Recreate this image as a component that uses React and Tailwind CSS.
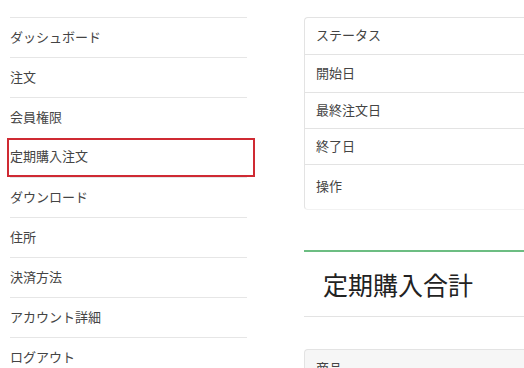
export default function App() {
  const items = [
    "ダッシュボード",
    "注文",
    "会員権限",
    "定期購入注文",
    "ダウンロード",
    "住所",
    "決済方法",
    "アカウント詳細",
    "ログアウト",
  ];
  const rows = [
    ["ステータス", "h-[36px]"],
    ["開始日", "h-[38px]"],
    ["最終注文日", "h-[36px]"],
    ["終了日", "h-[36px]"],
    ["操作", "h-[46px]"],
  ];
  return (
    <div
      className="w-[524px] h-[368px] overflow-hidden bg-white flex items-start pl-[10px] pt-[17px] text-[#444]"
      style={{ fontFamily: '"Noto Sans CJK JP", "Noto Sans", sans-serif' }}
    >
      <ul className="w-[237px] shrink-0 flex flex-col">
        {items.map((t, i) => (
          <li
            key={t}
            className={`relative shrink-0 h-[40px] pb-[2px] flex items-center text-[13px] ${i === 3 ? "" : "border-t border-[#e6e6e6]"}`}
          >
            {i === 3 && (
              <span className="absolute left-[-3px] right-[-8px] top-[1px] bottom-0 border-2 border-[#cf2a33]"></span>
            )}
            <span>{t}</span>
          </li>
        ))}
      </ul>
      <div className="ml-[57px] flex-1 flex flex-col">
        <div className="shrink-0 border border-r-0 border-[#e3e3e3] border-b-[#f2f2f2] rounded-tl-[4px] rounded-bl-[4px] h-[193px] flex flex-col">
          {rows.map(([t, h], i) => (
            <div
              key={t}
              className={`${h} shrink-0 flex pl-[11px] text-[13px] ${i > 0 ? "border-t border-[#e3e3e3]" : ""} ${i === 4 ? "items-start pt-[11px]" : "items-center pb-[2px]"}`}
            >
              {t}
            </div>
          ))}
        </div>
        <div className="shrink-0 mt-[40px] border-t-2 border-[#6cbd82] h-[67px] border-b border-b-[#e3e3e3] flex items-center pl-[19px]">
          <h2 className="text-[25px] text-[#222] leading-none">定期購入合計</h2>
        </div>
        <div className="shrink-0 mt-[32px] bg-[#f6f6f6] border border-r-0 border-[#e3e3e3] rounded-tl-[4px] h-[40px] pl-[11px] pt-[8px] text-[13px]">
          商品
        </div>
      </div>
    </div>
  );
}
